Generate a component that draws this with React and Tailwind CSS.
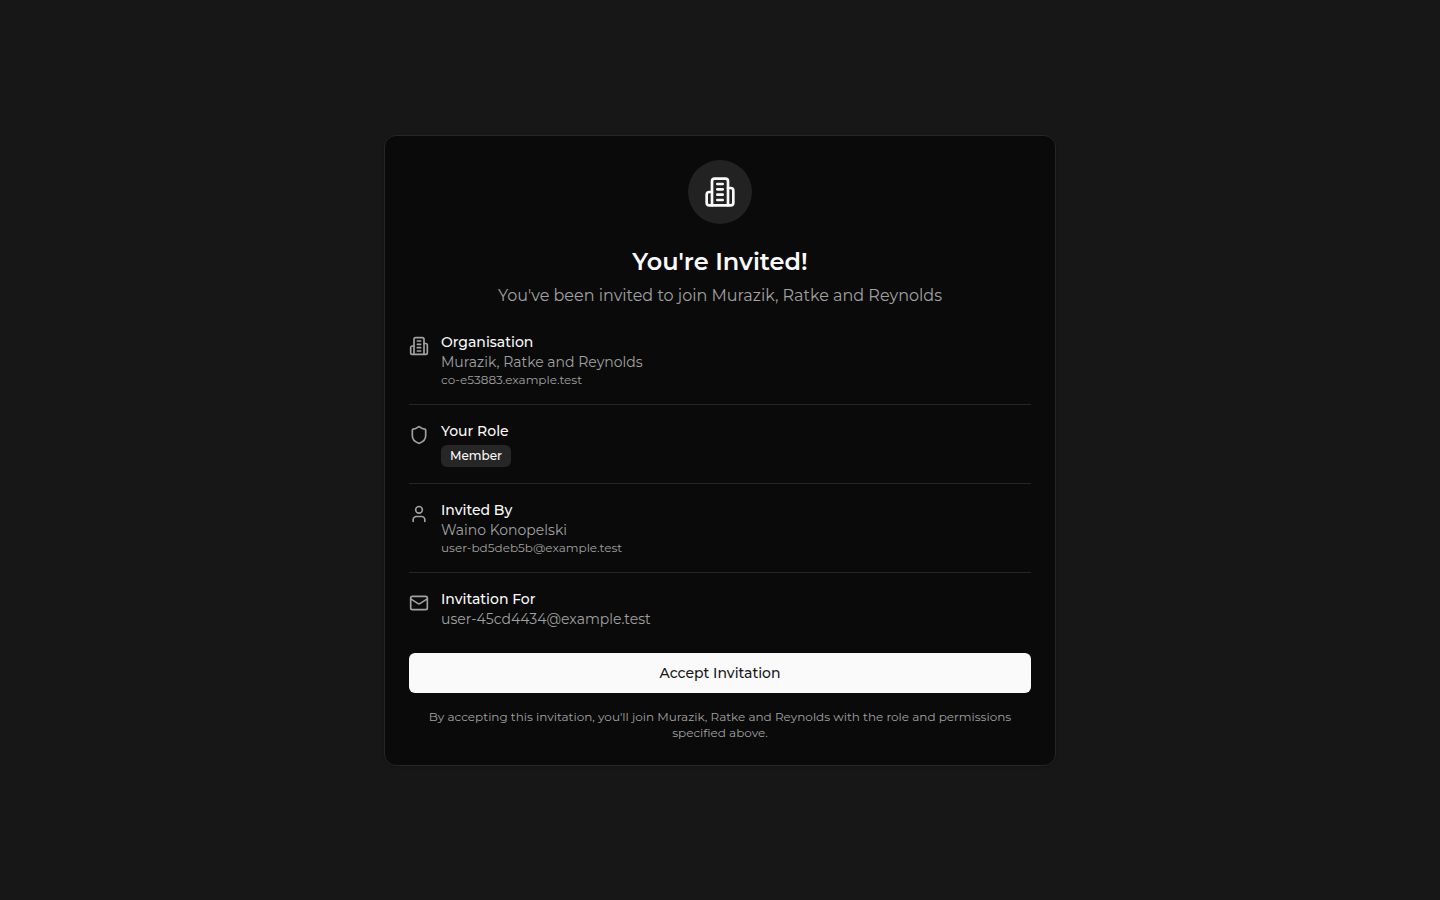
import React from "react";
import { Shield, User } from "lucide-react";

const invitation = {
    organisation: "Murazik, Ratke and Reynolds",
    domain: "co-e53883.example.test",
    role: "Member",
    inviter: "Waino Konopelski",
    inviterEmail: "user-bd5deb5b@example.test",
    email: "user-45cd4434@example.test",
};

const BuildingIcon = ({ className }) => (
    <svg className={className} viewBox="0 0 24 24" fill="none" stroke="currentColor" strokeWidth="2" strokeLinecap="round" strokeLinejoin="round" aria-hidden="true">
        <path d="M6 22V4a2 2 0 0 1 2-2h8a2 2 0 0 1 2 2v18Z" />
        <path d="M6 12H4a2 2 0 0 0-2 2v6a2 2 0 0 0 2 2h2" />
        <path d="M18 9h2a2 2 0 0 1 2 2v9a2 2 0 0 1-2 2h-2" />
        <path d="M10 6h4" />
        <path d="M10 10h4" />
        <path d="M10 14h4" />
        <path d="M10 18h4" />
    </svg>
);

const MailIcon = ({ className }) => (
    <svg className={className} viewBox="0 0 24 24" fill="none" stroke="currentColor" strokeWidth="2" strokeLinecap="round" strokeLinejoin="round" aria-hidden="true">
        <rect width="20" height="16" x="2" y="4" rx="2" />
        <path d="m22 7-8.97 5.7a1.94 1.94 0 0 1-2.06 0L2 7" />
    </svg>
);

const DetailRow = ({ icon: Icon, label, children }) => (
    <div className="flex items-start gap-3 py-4 first:pt-0 last:pb-0">
        <Icon className="mt-1 size-5 shrink-0 text-[#a1a1a1]" />
        <div className="min-w-0 flex-1">
            <p className="text-sm font-medium text-neutral-50">{label}</p>
            {children}
        </div>
    </div>
);

export default function App() {
    return (
        <main className="flex min-h-screen items-center justify-center bg-[#171717] p-4 font-['Montserrat','Inter',sans-serif]">
            <div className="w-full max-w-2xl rounded-xl border border-[#262626] bg-[#0a0a0a] p-6 text-neutral-50 shadow-sm">
                {/* Header */}
                <div className="mb-6 flex flex-col items-center gap-1.5 text-center">
                    <div className="mb-4 flex size-16 items-center justify-center rounded-full bg-[#222222]">
                        <BuildingIcon className="size-8" />
                    </div>
                    <h1 className="text-2xl font-semibold">You're Invited!</h1>
                    <p className="text-base text-[#a1a1a1]">{`You've been invited to join ${invitation.organisation}`}</p>
                </div>

                {/* Details */}
                <div className="mb-6 divide-y divide-[#262626]">
                    <DetailRow icon={BuildingIcon} label="Organisation">
                        <p className="text-sm text-[#a1a1a1]">{invitation.organisation}</p>
                        <p className="text-xs text-[#a1a1a1]">{invitation.domain}</p>
                    </DetailRow>
                    <DetailRow icon={Shield} label="Your Role">
                        <span className="mt-1 flex w-fit rounded-md border border-transparent bg-[#262626] px-2 py-0.5 text-xs font-medium">
                            {invitation.role}
                        </span>
                    </DetailRow>
                    <DetailRow icon={User} label="Invited By">
                        <p className="text-sm text-[#a1a1a1]">{invitation.inviter}</p>
                        <p className="text-xs text-[#a1a1a1]">{invitation.inviterEmail}</p>
                    </DetailRow>
                    <DetailRow icon={MailIcon} label="Invitation For">
                        <p className="text-sm text-[#a1a1a1]">{invitation.email}</p>
                    </DetailRow>
                </div>

                <button type="button" className="h-10 w-full cursor-pointer rounded-md bg-neutral-50 px-6 text-sm font-medium text-[#171717] hover:bg-neutral-200">
                    Accept Invitation
                </button>

                <p className="mt-4 text-center text-xs text-[#a1a1a1]">
                    {`By accepting this invitation, you'll join ${invitation.organisation} with the role and permissions specified above.`}
                </p>
            </div>
        </main>
    );
}
